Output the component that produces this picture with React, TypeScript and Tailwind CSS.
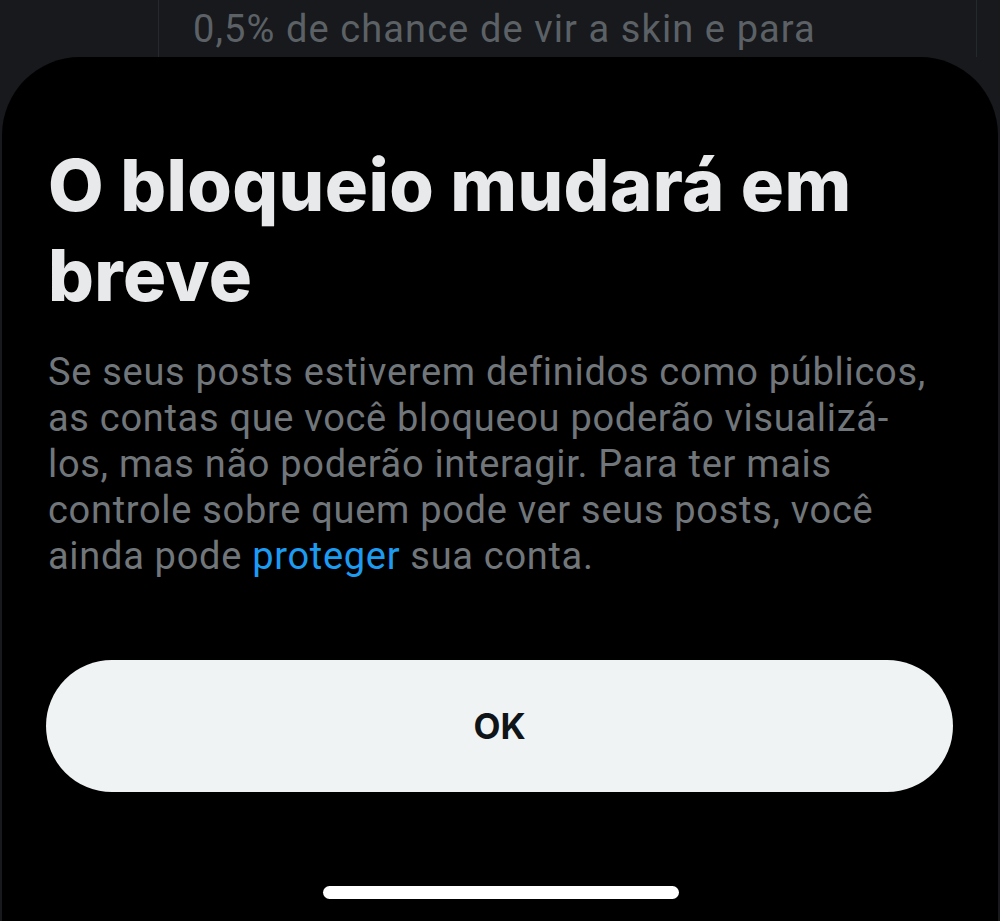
import React from 'react';

export default function App() {
  return (
    <div className="min-h-[921px] h-[921px] flex flex-col bg-[#17191d] overflow-hidden">
      {/* feed behind the sheet */}
      <div className="h-[57px] shrink-0 flex">
        <div className="w-[158px] shrink-0" />
        <div className="flex-1 border-l border-r border-[#25282c] pl-[34px] pt-[5px] overflow-hidden">
          <p className="font-['Roboto',sans-serif] text-[38px] leading-[48px] tracking-[1.1px] text-[#5c6166] whitespace-nowrap">
            0,5% de chance de vir a skin e para
          </p>
        </div>
        <div className="w-[23px] shrink-0" />
      </div>

      {/* bottom sheet */}
      <div className="flex-1 bg-black rounded-t-[78px] mx-[2px] pl-[46px] pr-[58px] pt-[83px] flex flex-col">
        <h1 className="font-['Inter',sans-serif] font-extrabold text-[72px] leading-[90px] tracking-[0.4px] text-[#e7e9ea]">
          O bloqueio mudará em breve
        </h1>
        <p className="mt-[29px] font-['Roboto',sans-serif] text-[38px] leading-[46px] tracking-[0.7px] text-[#71767b]">
          Se seus posts estiverem definidos como públicos, as contas que você bloqueou poderão visualizá-los, mas não poderão interagir. Para ter mais controle sobre quem pode ver seus posts, você ainda pode{' '}
          <span className="text-[#1d9bf0]">proteger</span> sua conta.
        </p>
        <button className="mt-[81px] h-[132px] w-[907px] -ml-[2px] rounded-full bg-[#eff3f4] flex items-center justify-center">
          <span className="font-['Inter',sans-serif] font-bold text-[35px] text-[#0f1419]">OK</span>
        </button>
        <div className="flex-1" />
        <div className="flex justify-center pb-[22px] -ml-[44px] -mr-[58px]">
          <div className="w-[356px] h-[13px] rounded-full bg-white" />
        </div>
      </div>
    </div>
  );
}
